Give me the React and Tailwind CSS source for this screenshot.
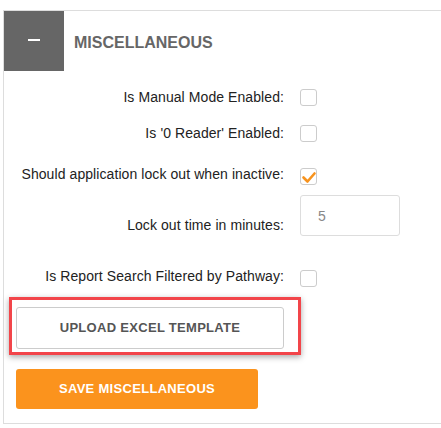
import React from "react";

const Checkbox = ({ checked = false }) => (
    <span className="relative block w-[17px] h-[17px] shrink-0 rounded-[3px] border border-[#ccc] bg-white">
        {checked && (
            <svg className="absolute -left-px -top-px" width="17" height="17" viewBox="0 0 17 17">
                <polyline
                    points="3.5,9.5 7.5,13.5 14.5,5.5"
                    fill="none"
                    stroke="#f7931e"
                    strokeWidth="2.6"
                    strokeLinecap="round"
                    strokeLinejoin="round"
                />
            </svg>
        )}
    </span>
);

const Row = ({ label, className = "", labelClass = "", children }) => (
    <div className={`flex items-center ${className}`}>
        <label className={`w-[280px] text-right text-[14px] leading-[17px] tracking-[0.08px] text-[#222] ${labelClass}`}>
            {label}
        </label>
        <div className="ml-[16px]">{children}</div>
    </div>
);

const App = () => {
    return (
        <div className="w-[441px] h-[428px] overflow-hidden bg-white font-['Liberation_Sans',Arial,sans-serif]">
            <div className="ml-[3px] mt-[10px] w-[460px] h-[414px] border border-[#ddd]">
                {/* Panel header */}
                <div className="flex items-center h-[60px]">
                    <button className="flex items-center justify-center w-[60px] h-[60px] bg-[#666]">
                        <span className="block w-[12px] h-[2px] bg-white -mt-[2px]" />
                    </button>
                    <h2 className="ml-[10px] mt-[4px] text-[16px] font-bold text-[#666]">MISCELLANEOUS</h2>
                </div>

                {/* Settings */}
                <Row label="Is Manual Mode Enabled:" className="mt-[18px]">
                    <Checkbox />
                </Row>
                <Row label="Is '0 Reader' Enabled:" className="mt-[19px]">
                    <Checkbox />
                </Row>
                <Row label="Should application lock out when inactive:" className="mt-[24px]" labelClass="mb-[4px]">
                    <Checkbox checked />
                </Row>
                <div className="flex mt-[8px]">
                    <label className="w-[280px] self-end mb-[2px] text-right text-[14px] leading-[17px] tracking-[0.08px] text-[#222]">
                        Lock out time in minutes:
                    </label>
                    <input
                        type="text"
                        defaultValue="5"
                        className="ml-[16px] w-[100px] h-[41px] pl-[17px] rounded-[3px] border border-[#ddd] text-[14px] text-[#888] outline-none"
                    />
                </div>
                <Row label="Is Report Search Filtered by Pathway:" className="mt-[32px]" labelClass="mb-[4px]">
                    <Checkbox />
                </Row>

                {/* Actions */}
                <div className="ml-[5px] mt-[8px] w-[292px] h-[58px] border-[3px] border-[#f2454a] shadow-[0_2px_6px_rgba(0,0,0,0.35)]">
                    <button className="ml-[4px] mt-[7px] w-[268px] h-[42px] rounded-[3px] border border-[#ccc] bg-white text-[13px] font-bold tracking-[0.3px] text-[#555]">
                        UPLOAD EXCEL TEMPLATE
                    </button>
                </div>
                <button className="ml-[12px] mt-[14px] w-[242px] h-[40px] rounded-[3px] bg-[#fb931d] text-[13px] font-bold tracking-[0.3px] text-white">
                    SAVE MISCELLANEOUS
                </button>
            </div>
        </div>
    );
};

export default App;
